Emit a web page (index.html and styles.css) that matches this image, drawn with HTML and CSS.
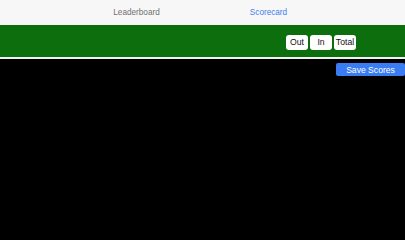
FILE: index.html
```html
<!DOCTYPE html>
<html>
<head>
<meta charset="utf-8">
<link rel="stylesheet" href="styles.css">
</head>
<body>
<div class="tabs">
  <div class="tab">Leaderboard</div>
  <div class="tab active">Scorecard</div>
</div>
<div class="band">
  <div class="segs">
    <div class="seg">Out</div>
    <div class="seg">In</div>
    <div class="seg">Total</div>
  </div>
</div>
<div class="sep"></div>
<div class="actions">
  <button class="save">Save Scores</button>
</div>
</body>
</html>
```
FILE: styles.css
```css
html, body {
  margin: 0;
  padding: 0;
  background: #000;
  font-family: "Liberation Sans", Arial, sans-serif;
}
.tabs {
  height: 25px;
  background: #f7f7f7;
  display: flex;
  justify-content: center;
  align-items: center;
}
.tab {
  width: 132px;
  text-align: center;
  font-size: 8.2px;
  color: #707070;
  padding-top: 0;
}
.tab.active {
  color: #3f7ff0;
}
.band {
  height: 32px;
  background: #0d6e0d;
  display: flex;
  justify-content: flex-end;
  align-items: center;
  padding-right: 49px;
}
.segs {
  display: flex;
  gap: 2px;
  padding-top: 2px;
}
.seg {
  background: #fff;
  height: 15px;
  min-width: 22px;
  padding: 0 1px;
  border-radius: 3px;
  box-sizing: border-box;
  display: flex;
  align-items: center;
  justify-content: center;
  font-size: 8.7px;
  color: #111;
}
.sep {
  height: 2px;
  background: #f2f2f2;
}
.actions {
  display: flex;
  justify-content: flex-end;
  padding-top: 4px;
}
.save {
  width: 69px;
  height: 13px;
  margin-right: 0;
  border: none;
  border-radius: 2px;
  background: #3a7cf2;
  color: #fff;
  font-family: "Liberation Sans", Arial, sans-serif;
  font-size: 8.6px;
  padding: 0;
  display: flex;
  align-items: center;
  justify-content: center;
}
```
